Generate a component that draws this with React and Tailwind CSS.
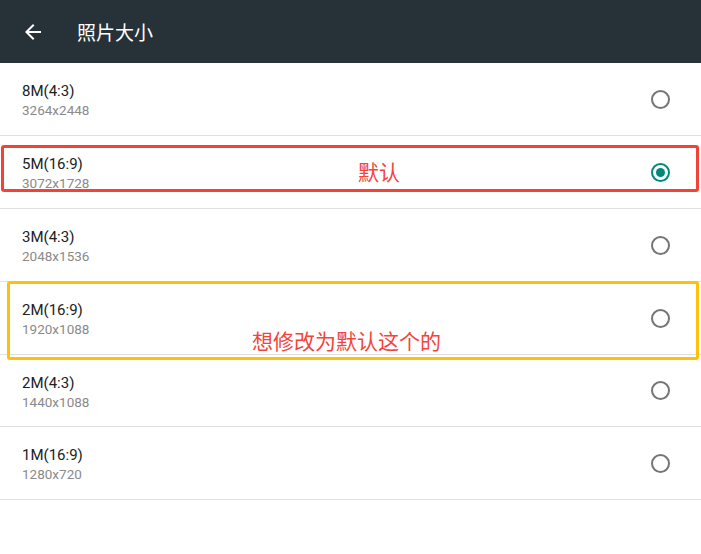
import React, { useState } from 'react';

const sizes = [
  { id: '8m', label: '8M(4:3)', res: '3264x2448', h: 'h-[73px]' },
  { id: '5m', label: '5M(16:9)', res: '3072x1728', h: 'h-[73px]' },
  { id: '3m', label: '3M(4:3)', res: '2048x1536', h: 'h-[73px]' },
  { id: '2m169', label: '2M(16:9)', res: '1920x1088', h: 'h-[73px]' },
  { id: '2m43', label: '2M(4:3)', res: '1440x1088', h: 'h-[72px]' },
  { id: '1m', label: '1M(16:9)', res: '1280x720', h: 'h-[73px]' },
];

function Radio({ checked }) {
  return (
    <span
      className={`flex items-center justify-center w-[19px] h-[19px] rounded-full border-2 ${
        checked ? 'border-[#00897b]' : 'border-[#757575]'
      }`}
    >
      {checked && <span className="w-[9px] h-[9px] rounded-full bg-[#00897b]" />}
    </span>
  );
}

export default function App() {
  const [selected, setSelected] = useState('5m');

  return (
    <div className="relative w-[701px] h-[554px] bg-white overflow-hidden font-['Roboto','Noto_Sans_CJK_SC',sans-serif]">
      <header className="h-[63px] bg-[#263238] flex items-center">
        <button className="ml-[21px] w-6 h-6 flex items-center justify-center text-white">
          <svg width="24" height="24" viewBox="0 0 24 24" fill="currentColor">
            <path d="M20 11H7.83l5.59-5.59L12 4l-8 8 8 8 1.41-1.41L7.83 13H20v-2z" />
          </svg>
        </button>
        <h1 className="ml-[32px] text-white text-[19px] font-['Noto_Sans_CJK_SC',sans-serif] leading-none">照片大小</h1>
      </header>

      <ul>
        {sizes.map(s => (
          <li
            key={s.id}
            onClick={() => setSelected(s.id)}
            className={`${s.h} border-b border-[#e0e0e0] flex items-center pl-[22px] pr-[31px]`}
          >
            <div className="flex-1 self-start pt-[18px]">
              <div className="text-[15px] leading-[20px] text-[#212121]">{s.label}</div>
              <div className="text-[13.5px] leading-[18px] text-[#8a8a8a]">{s.res}</div>
            </div>
            <Radio checked={selected === s.id} />
          </li>
        ))}
      </ul>

      {/* annotations */}
      <div className="absolute left-[1px] top-[145px] w-[698px] h-[47px] border-[3px] border-[#f44336] rounded-[3px] pointer-events-none" />
      <span className="absolute left-[358px] top-[159px] text-[21px] leading-[24px] text-[#f4433c] font-['Noto_Sans_CJK_SC',sans-serif]">默认</span>

      <div className="absolute left-[7px] top-[281px] w-[692px] h-[79px] border-[3px] border-[#ffc107] rounded-[3px] pointer-events-none" />
      <span className="absolute left-[252px] top-[328px] text-[21px] leading-[24px] text-[#f4433c] font-['Noto_Sans_CJK_SC',sans-serif]">想修改为默认这个的</span>
    </div>
  );
}
